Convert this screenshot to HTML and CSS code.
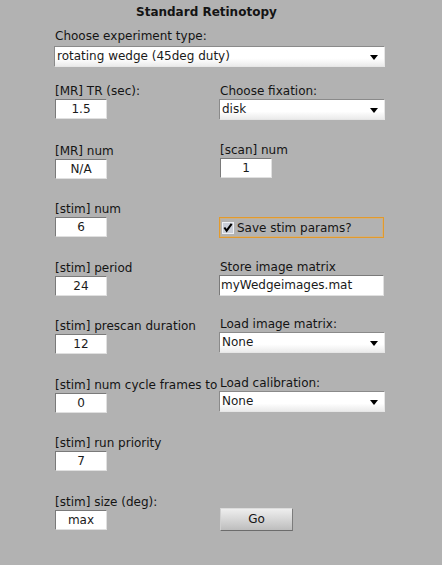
FILE: index.html
```html
<!DOCTYPE html>
<html>
<head>
<meta charset="utf-8">
<title>Standard Retinotopy</title>
<link rel="stylesheet" href="styles.css">
</head>
<body>
<div class="panel">
  <div class="title">Standard Retinotopy</div>
  <div class="top">
    <div class="lbl">Choose experiment type:</div>
    <div class="select"><span>rotating wedge (45deg duty)</span><svg class="arrow" width="8" height="5" viewBox="0 0 8 5"><path d="M0 0H8L4 5Z" fill="#000"/></svg></div>
  </div>
  <div class="grid">
    <div class="cell"><div class="lbl left">[MR] TR (sec):</div><div class="num">1.5</div></div>
    <div class="cell"><div class="lbl">Choose fixation:</div><div class="select"><span>disk</span><svg class="arrow" width="8" height="5" viewBox="0 0 8 5"><path d="M0 0H8L4 5Z" fill="#000"/></svg></div></div>

    <div class="cell"><div class="lbl left">[MR] num</div><div class="num">N/A</div></div>
    <div class="cell up1"><div class="lbl">[scan] num</div><div class="num">1</div></div>

    <div class="cell"><div class="lbl left">[stim] num</div><div class="num">6</div></div>
    <div class="cell"><div class="lbl"></div><div class="check"><span class="box"><svg width="11" height="11" viewBox="0 0 11 11"><path d="M1.5 5.5L4 9L9.5 1.5" stroke="#000" stroke-width="2.2" fill="none"/></svg></span><span>Save stim params?</span></div></div>

    <div class="cell"><div class="lbl left">[stim] period</div><div class="num">24</div></div>
    <div class="cell up1"><div class="lbl">Store image matrix</div><div class="text">myWedgeimages.mat</div></div>

    <div class="cell"><div class="lbl left">[stim] prescan duration</div><div class="num">12</div></div>
    <div class="cell up2"><div class="lbl">Load image matrix:</div><div class="select"><span>None</span><svg class="arrow" width="8" height="5" viewBox="0 0 8 5"><path d="M0 0H8L4 5Z" fill="#000"/></svg></div></div>

    <div class="cell"><div class="lbl left">[stim] num cycle frames to</div><div class="num">0</div></div>
    <div class="cell up2"><div class="lbl">Load calibration:</div><div class="select"><span>None</span><svg class="arrow" width="8" height="5" viewBox="0 0 8 5"><path d="M0 0H8L4 5Z" fill="#000"/></svg></div></div>

    <div class="cell"><div class="lbl left">[stim] run priority</div><div class="num">7</div></div>
    <div class="cell"></div>

    <div class="cell"><div class="lbl left">[stim] size (deg):</div><div class="num">max</div></div>
    <div class="cell up2"><div class="lbl"></div><div class="button">Go</div></div>
  </div>
</div>
</body>
</html>
```

FILE: styles.css
```css
html, body {
  margin: 0;
  padding: 0;
  background: #b2b2b2;
}
body {
  width: 442px;
  height: 565px;
  overflow: hidden;
  font-family: "DejaVu Sans", Verdana, sans-serif;
  font-size: 12px;
  color: #141414;
}
.panel {
  padding: 0 0 0 54px;
}
.title {
  padding: 4px 0 0 82px;
  height: 17px;
  line-height: 16px;
  font-weight: bold;
  font-size: 12px;
}
.top {
  padding-top: 8px;
  width: 331px;
}
.lbl {
  height: 15px;
  line-height: 15px;
  padding-left: 1px;
  white-space: nowrap;
}
.lbl.left {
  width: 164px;
  overflow: hidden;
}
.select {
  position: relative;
  height: 21px;
  box-sizing: border-box;
  background: linear-gradient(#ffffff 0%, #ffffff 60%, #ebebeb 100%);
  border: 1px solid;
  border-color: #8a8a8a #e6e6e6 #e6e6e6 #8a8a8a;
  line-height: 19px;
  padding-left: 2px;
  color: #1a1a1a;
}
.top .select {
  margin-top: 2px;
}
.arrow {
  position: absolute;
  right: 6px;
  top: 8px;
}
.grid {
  display: grid;
  grid-template-columns: 165px 166px;
  grid-template-rows: 60px 58px 59px 58px 59px 58px 59px 40px;
  margin-top: 17px;
}
.cell {
  display: flex;
  flex-direction: column;
  align-items: flex-start;
}
.cell .select {
  align-self: stretch;
}
.up1 { margin-top: -1px; }
.up2 { margin-top: -2px; }
.num {
  width: 52px;
  height: 20px;
  box-sizing: border-box;
  margin-left: 1px;
  background: #fff;
  border: 1px solid;
  border-color: #7a7a7a #e0e0e0 #e0e0e0 #7a7a7a;
  text-align: center;
  line-height: 18px;
  color: #1a1a1a;
}
.text {
  align-self: stretch;
  height: 21px;
  box-sizing: border-box;
  background: #fff;
  border: 1px solid;
  border-color: #7a7a7a #e0e0e0 #e0e0e0 #7a7a7a;
  line-height: 19px;
  padding-left: 1px;
  color: #1a1a1a;
  margin-right: 1px;
}
.check {
  align-self: stretch;
  height: 21px;
  box-sizing: border-box;
  border: 1px solid #e39a2c;
  box-shadow: inset 0 0 0 1px #c8b08a;
  display: flex;
  align-items: center;
  gap: 3px;
  padding-left: 2px;
  margin-right: 1px;
}
.box {
  width: 12px;
  height: 12px;
  box-sizing: border-box;
  background: #c9ced8;
  border: 1px solid #eef0f4;
  display: flex;
  align-items: center;
  justify-content: center;
}
.button {
  margin-left: 1px;
  width: 73px;
  height: 23px;
  box-sizing: border-box;
  border: 1px solid;
  border-color: #dcdcdc #7c7c7c #6c6c6c #d0d0d0;
  background: linear-gradient(#eeeeee, #d6d6d6 50%, #bdbdbd);
  text-align: center;
  line-height: 21px;
}
```
